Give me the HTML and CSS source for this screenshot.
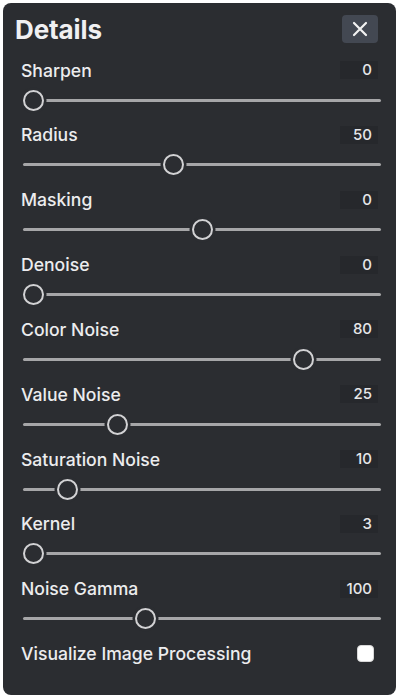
FILE: index.html
```html
<!DOCTYPE html>
<html>
<head>
<meta charset="utf-8">
<link rel="stylesheet" href="styles.css">
</head>
<body>
<div class="panel">
  <div class="header">
    <h1 class="title">Details</h1>
    <button class="close" aria-label="Close">
      <svg width="16" height="16" viewBox="0 0 16 16"><path d="M2 2L14 14M14 2L2 14" stroke="#f2f2f2" stroke-width="2.2" stroke-linecap="round"/></svg>
    </button>
  </div>
  <div class="items">
    <div class="item"><div class="label-row"><span class="label">Sharpen</span><span class="value">0</span></div><input class="slider" type="range" min="0" max="100" value="0"></div>
    <div class="item"><div class="label-row"><span class="label">Radius</span><span class="value">50</span></div><input class="slider" type="range" min="0" max="120" value="50"></div>
    <div class="item"><div class="label-row"><span class="label">Masking</span><span class="value">0</span></div><input class="slider" type="range" min="-100" max="100" value="0"></div>
    <div class="item"><div class="label-row"><span class="label">Denoise</span><span class="value">0</span></div><input class="slider" type="range" min="0" max="100" value="0"></div>
    <div class="item"><div class="label-row"><span class="label">Color Noise</span><span class="value">80</span></div><input class="slider" type="range" min="0" max="100" value="80"></div>
    <div class="item"><div class="label-row"><span class="label">Value Noise</span><span class="value">25</span></div><input class="slider" type="range" min="0" max="100" value="25"></div>
    <div class="item"><div class="label-row"><span class="label">Saturation Noise</span><span class="value">10</span></div><input class="slider" type="range" min="0" max="100" value="10"></div>
    <div class="item"><div class="label-row"><span class="label">Kernel</span><span class="value">3</span></div><input class="slider" type="range" min="3" max="15" value="3"></div>
    <div class="item"><div class="label-row"><span class="label">Noise Gamma</span><span class="value">100</span></div><input class="slider" type="range" min="0" max="300" value="100"></div>
    <div class="check-row"><span class="label">Visualize Image Processing</span><span class="checkbox"></span></div>
  </div>
</div>
</body>
</html>
```

FILE: styles.css
```css
html, body {
  margin: 0;
  padding: 0;
  background: #ffffff;
}
body {
  font-family: Inter, "Noto Sans", sans-serif;
  color: #ececec;
}
.panel {
  margin: 3px;
  width: 393px;
  height: 692px;
  box-sizing: border-box;
  background: #2b2d31;
  border-radius: 8px;
  padding: 11px 18px 0 18px;
}
.header {
  display: flex;
  align-items: center;
  justify-content: space-between;
  height: 28px;
  margin: 1px 0 18px 0;
}
.title {
  margin: 0 0 0 -6px;
  font-size: 26px;
  font-weight: 700;
  color: #f0f0f2;
  letter-spacing: -0.1px;
}
.close {
  width: 36px;
  height: 28px;
  border: none;
  border-radius: 4px;
  background: #434852;
  display: flex;
  align-items: center;
  justify-content: center;
  padding: 0;
}
.items {
  display: flex;
  flex-direction: column;
  gap: 6.85px;
}
.item {
  display: flex;
  flex-direction: column;
  height: 58px;
}
.label-row {
  display: flex;
  align-items: center;
  justify-content: space-between;
  height: 20px;
  margin-top: -1px;
  margin-bottom: 1px;
}
.label {
  font-size: 17.6px;
  font-weight: 500;
  color: #ececee;
}
.value {
  width: 38px;
  height: 18px;
  box-sizing: border-box;
  background: #26282c;
  font-size: 15px;
  font-weight: 500;
  line-height: 18px;
  text-align: right;
  padding-right: 6px;
  color: #e6e6e8;
}
.slider {
  -webkit-appearance: none;
  appearance: none;
  margin: 0 -3px 0 2px;
  height: 38px;
  background: transparent;
}
.slider::-webkit-slider-runnable-track {
  height: 3px;
  background: #a6a6a8;
  border-radius: 2px;
}
.slider::-webkit-slider-thumb {
  -webkit-appearance: none;
  width: 21px;
  height: 21px;
  box-sizing: border-box;
  margin-top: -9px;
  border-radius: 50%;
  background: #2b2d31;
  border: 2.5px solid #d2d2d4;
  box-shadow: 0 0 0 2.5px #2b2d31;
}
.check-row {
  display: flex;
  align-items: center;
  justify-content: space-between;
  height: 22px;
  margin-top: -2px;
}
.checkbox {
  width: 17px;
  height: 17px;
  box-sizing: border-box;
  background: #ffffff;
  border-radius: 4px;
  border: 1px solid #d8d8d8;
  margin-right: 4px;
}
```
